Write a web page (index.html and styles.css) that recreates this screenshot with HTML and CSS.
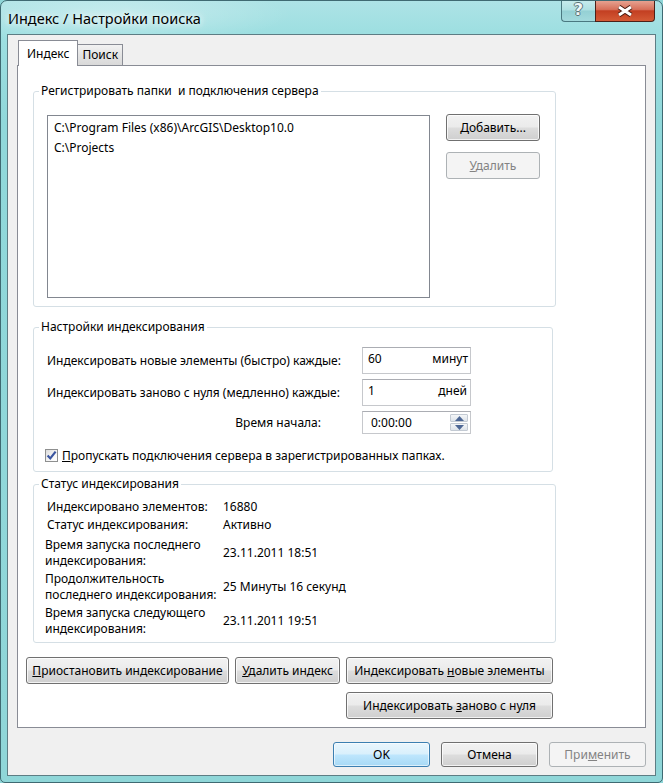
FILE: index.html
```html
<!DOCTYPE html>
<html lang="ru">

<head>
    <meta charset="UTF-8">
    <title>Индекс / Настройки поиска</title>
    <link rel="stylesheet" href="styles.css">
</head>

<body>
    <div class="window">
        <div class="titlebar">
            <span class="title">Индекс / Настройки поиска</span>
            <div class="caption-btns">
                <div class="cap-help">?</div>
                <div class="cap-close">
                    <svg width="18" height="12" viewBox="0 0 18 12">
                        <path d="M3 2 L15 10 M15 2 L3 10" stroke="#4b1d12" stroke-width="5" fill="none"/>
                        <path d="M3 2 L15 10 M15 2 L3 10" stroke="#fff" stroke-width="3" fill="none"/>
                    </svg>
                </div>
            </div>
        </div>

        <div class="client">
            <div class="tabs">
                <div class="tab active">Индекс</div>
                <div class="tab">Поиск</div>
            </div>

            <div class="tab-panel">
                <fieldset class="group group-folders">
                    <legend>Регистрировать папки&nbsp; и подключения сервера</legend>
                    <div class="folders">
                        <div class="listbox">
                            <div class="list-item">C:\Program Files (x86)\ArcGIS\Desktop10.0</div>
                            <div class="list-item">C:\Projects</div>
                        </div>
                        <div class="side-btns">
                            <button class="btn btn-side"><u>Д</u>обавить...</button>
                            <button class="btn btn-side" disabled><u>У</u>далить</button>
                        </div>
                    </div>
                </fieldset>

                <fieldset class="group group-settings">
                    <legend>Настройки индексирования</legend>
                    <div class="settings">
                        <span class="set-label">Индексировать новые элементы (быстро) каждые:</span>
                        <div class="field"><span>60</span><span>минут</span></div>
                        <span class="set-label">Индексировать заново с нуля (медленно) каждые:</span>
                        <div class="field"><span>1</span><span class="unit-days">дней</span></div>
                        <span class="set-label set-label-right">Время начала:</span>
                        <div class="field field-time">
                            <span>0:00:00</span>
                            <div class="spinner">
                                <div class="spin-btn">
                                    <svg width="9" height="5" viewBox="0 0 9 5"><path d="M0 5 L4.5 0 L9 5 Z" fill="#4d6795"/></svg>
                                </div>
                                <div class="spin-btn">
                                    <svg width="9" height="5" viewBox="0 0 9 5"><path d="M0 0 L9 0 L4.5 5 Z" fill="#4d6795"/></svg>
                                </div>
                            </div>
                        </div>
                    </div>
                    <label class="check-row">
                        <span class="checkbox">
                            <svg width="11" height="11" viewBox="0 0 11 11"><path d="M1.6 5.4 L4.3 8.4 L9.6 1.6" fill="none" stroke="#3a55a0" stroke-width="2.2"/></svg>
                        </span>
                        <span><u>П</u>ропускать подключения сервера в зарегистрированных папках.</span>
                    </label>
                </fieldset>

                <fieldset class="group group-status">
                    <legend>Статус индексирования</legend>
                    <div class="status">
                        <div class="status-row">
                            <span class="status-label indent">Индексировано элементов:</span>
                            <span>16880</span>
                        </div>
                        <div class="status-row">
                            <span class="status-label indent">Статус индексирования:</span>
                            <span>Активно</span>
                        </div>
                        <div class="status-row status-gap">
                            <span class="status-label">Время запуска последнего<br>индексирования:</span>
                            <span>23.11.2011 18:51</span>
                        </div>
                        <div class="status-row">
                            <span class="status-label">Продолжительность<br>последнего индексирования:</span>
                            <span>25 Минуты 16 секунд</span>
                        </div>
                        <div class="status-row">
                            <span class="status-label">Время запуска следующего<br>индексирования:</span>
                            <span>23.11.2011 19:51</span>
                        </div>
                    </div>
                </fieldset>

                <div class="actions">
                    <button class="btn"><u>П</u>риостановить индексирование</button>
                    <button class="btn"><u>У</u>далить индекс</button>
                    <button class="btn">Индексировать <u>н</u>овые элементы</button>
                    <button class="btn btn-rebuild">Индексировать <u>з</u>аново с нуля</button>
                </div>
            </div>

            <div class="dialog-btns">
                <button class="btn btn-dlg btn-default">OK</button>
                <button class="btn btn-dlg">Отмена</button>
                <button class="btn btn-dlg" disabled>При<u>м</u>енить</button>
            </div>
        </div>
    </div>
</body>

</html>
```

FILE: styles.css
```css
* {
    box-sizing: border-box;
}

html,
body {
    margin: 0;
    padding: 0;
}

body {
    font-family: 'Noto Sans', 'Open Sans', sans-serif;
    font-size: 12px;
    color: #000;
    background: #8fd6d8;
}

.window {
    width: 663px;
    height: 783px;
    border: 1px solid #3f6a72;
    border-radius: 7px 7px 5px 5px;
    background:
        radial-gradient(ellipse 180px 30px at 110px 14px, rgba(255, 255, 255, 0.35), rgba(255, 255, 255, 0) 100%),
        linear-gradient(180deg, #ade3e6 0%, #9edfe1 30px, #90d8da 120px, #8fd6d8 100%);
    padding: 0 6px 6px;
    display: flex;
    flex-direction: column;
    overflow: hidden;
}

/* title bar */
.titlebar {
    height: 33px;
    display: flex;
    justify-content: space-between;
    align-items: flex-start;
    flex-shrink: 0;
}

.title {
    padding: 7px 0 0 1px;
    font-size: 14.5px;
    line-height: 20px;
    color: #000;
    text-shadow: 0 0 6px rgba(255, 255, 255, 0.9), 0 0 10px rgba(255, 255, 255, 0.7);
}

.caption-btns {
    display: flex;
    margin-top: -1px;
    margin-right: 1px;
}

.cap-help {
    width: 34px;
    height: 22px;
    border: 1px solid #4a7880;
    border-top: none;
    border-right: none;
    border-radius: 0 0 0 4px;
    background: linear-gradient(180deg, #c8eced 0%, #aee0e2 48%, #94d0d4 52%, #a3dadd 100%);
    text-align: center;
    font-family: 'DejaVu Sans', sans-serif;
    font-weight: bold;
    font-size: 16px;
    line-height: 20px;
    color: #eef6f6;
    text-shadow: 1px 0 0 #5b7478, -1px 0 0 #5b7478, 0 1px 0 #5b7478, 0 -1px 0 #5b7478;
}

.cap-close {
    width: 60px;
    height: 22px;
    border: 1px solid #4c2018;
    border-top: none;
    border-radius: 0 0 4px 0;
    background: linear-gradient(180deg, #e8a796 0%, #d7705a 45%, #c33f22 52%, #d45a35 100%);
    display: flex;
    align-items: center;
    justify-content: center;
}

/* client area */
.client {
    flex: 1;
    border: 1px solid #5d7d84;
    background: #f0f0f0;
    padding: 5px 9px 8px;
    display: flex;
    flex-direction: column;
}

.tabs {
    height: 25px;
    display: flex;
    align-items: flex-end;
    padding-left: 1px;
    flex-shrink: 0;
}

.tab {
    height: 21px;
    line-height: 20px;
    padding: 0 4px;
    border: 1px solid #898c95;
    border-bottom: none;
    border-left: none;
    background: linear-gradient(180deg, #f2f2f2 0%, #e4e4e4 50%, #d9d9d9 100%);
}

.tab.active {
    height: 26px;
    line-height: 25px;
    margin-bottom: -1px;
    padding: 0 8px;
    border-left: 1px solid #898c95;
    background: #fff;
    position: relative;
    z-index: 1;
}

.tab-panel {
    flex: 1;
    background: #fff;
    border: 1px solid #898c95;
    display: flex;
    flex-direction: column;
}

/* group boxes */
.group {
    width: 523px;
    min-width: 0;
    margin: 0 0 0 15px;
    padding: 0 8px 8px 5px;
    border: 1px solid #d5dfe5;
    border-radius: 3px;
}

.group legend {
    padding: 0 2px;
    line-height: 16px;
}

.group-folders {
    margin-top: 17px;
}

.folders {
    display: flex;
    gap: 16px;
    padding: 16px 0 0 8px;
}

.listbox {
    width: 383px;
    height: 183px;
    border: 1px solid #828790;
    padding: 2px 6px;
}

.list-item {
    line-height: 20px;
}

.side-btns {
    display: flex;
    flex-direction: column;
    gap: 11px;
    margin-top: -1px;
}

.group-settings {
    width: 520px;
    margin-top: 12px;
    padding-bottom: 7px;
}

.settings {
    display: grid;
    grid-template-columns: 315px 109px;
    grid-template-rows: 27px 27px 23px;
    row-gap: 5px;
    align-items: center;
    padding: 12px 0 0 8px;
}

.set-label-right {
    text-align: right;
    padding-right: 41px;
}

.field {
    height: 100%;
    border: 1px solid #c6c8cc;
    border-top-color: #abadb3;
    background: #fff;
    display: flex;
    justify-content: space-between;
    align-items: center;
    padding: 0 2px 4px 5px;
}

.unit-days {
    padding-right: 1px;
}

.field-time {
    padding: 0 2px 0 8px;
}

.spinner {
    width: 18px;
    height: 17px;
    display: flex;
    flex-direction: column;
    gap: 1px;
}

.spin-btn {
    flex: 1;
    border: 1px solid #c3cad3;
    border-radius: 1px;
    background: linear-gradient(180deg, #f4f6f8 0%, #dde3ea 100%);
    display: flex;
    align-items: center;
    justify-content: center;
}

.check-row {
    display: flex;
    align-items: center;
    gap: 4px;
    margin: 13px 0 0 6px;
    line-height: 17px;
}

.checkbox {
    width: 13px;
    height: 13px;
    border: 1px solid #8e8f8f;
    background: linear-gradient(135deg, #dcdcdc 0%, #f6f6f6 60%, #fff 100%);
    display: flex;
    align-items: center;
    justify-content: center;
}

.group-status {
    margin-top: 4px;
    padding-bottom: 5px;
}

.status {
    display: flex;
    flex-direction: column;
    gap: 2px;
    padding: 7px 0 0 6px;
    line-height: 16px;
}

.status-row {
    display: flex;
    align-items: center;
}

.status-gap {
    margin-top: 2px;
}

.status-label {
    width: 178px;
    flex-shrink: 0;
}

.status-label.indent {
    padding-left: 2px;
}

/* buttons */
.btn {
    font: inherit;
    color: #000;
    height: 27px;
    padding: 0;
    border: 1px solid #707070;
    border-radius: 3px;
    background: linear-gradient(180deg, #f2f2f2 0%, #ebebeb 48%, #dddddd 52%, #cfcfcf 100%);
    box-shadow: inset 0 0 0 1px rgba(255, 255, 255, 0.75);
}

.btn:disabled {
    color: #838383;
    border-color: #adb2b5;
    background: #f4f4f4;
    box-shadow: none;
}

.btn-side {
    width: 94px;
}

.actions {
    display: grid;
    grid-template-columns: 203px 105px 207px;
    column-gap: 6px;
    row-gap: 8px;
    margin: 14px 0 0 8px;
}

.btn-rebuild {
    grid-column: 3;
}

.dialog-btns {
    display: flex;
    justify-content: flex-end;
    gap: 11px;
    margin-top: 14px;
    flex-shrink: 0;
}

.btn-dlg {
    width: 97px;
    height: 25px;
}

.btn-default {
    border-color: #3c7fb1;
    background: linear-gradient(180deg, #eaf6fd 0%, #d9f0fc 48%, #bee6fd 52%, #a7d9f5 100%);
    box-shadow: inset 0 0 0 1px rgba(255, 255, 255, 0.6);
}
```
